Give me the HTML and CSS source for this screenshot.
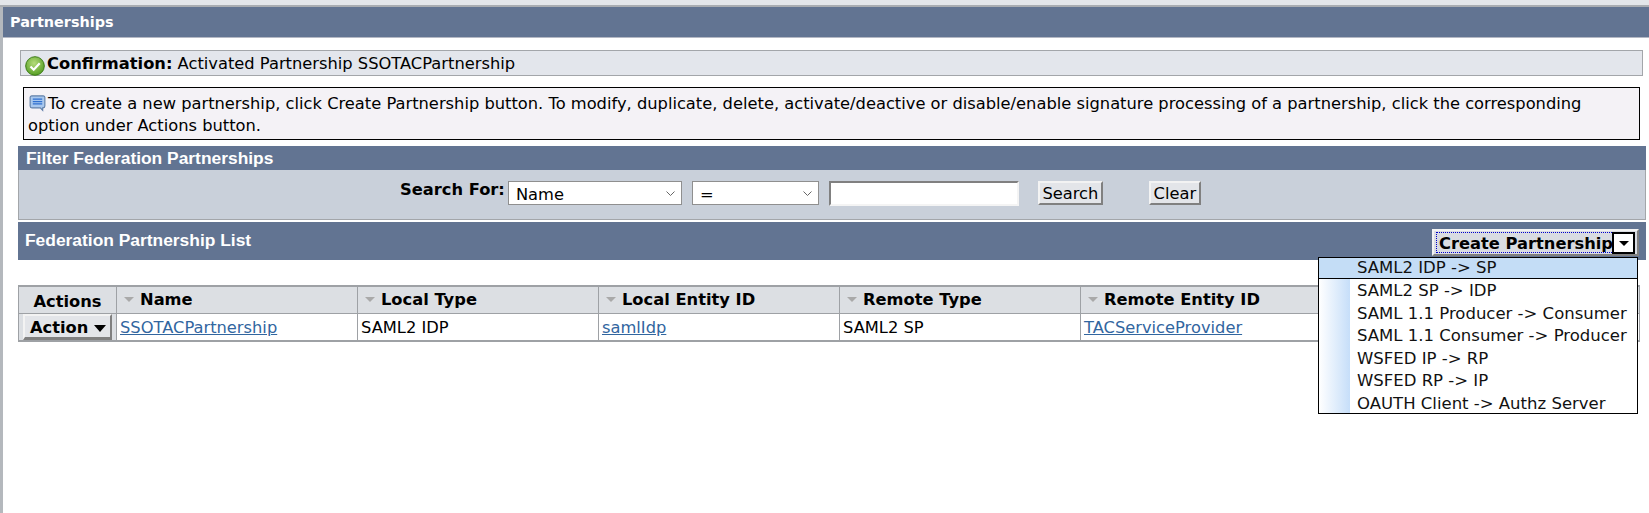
FILE: index.html
```html
<!DOCTYPE html>
<html lang="en">
<head>
<meta charset="utf-8">
<title>Partnerships</title>
<link rel="stylesheet" href="styles.css">
</head>
<body>
<div class="page">
  <div class="topband"></div>
  <h1 class="title">Partnerships</h1>
  <div class="confirm">
    <svg class="ic-check" viewBox="0 0 20 20" width="20" height="20"><defs><radialGradient id="g" cx="45%" cy="35%" r="70%"><stop offset="0" stop-color="#b5dc7a"/><stop offset="1" stop-color="#4f9a1e"/></radialGradient></defs><circle cx="10" cy="10" r="9.3" fill="url(#g)" stroke="#3d7d18"/><path d="M5.5 10.5l3.2 3.2 6-6.4" fill="none" stroke="#fff" stroke-width="2.2"/></svg>
    <span><b>Confirmation:</b> Activated Partnership SSOTACPartnership</span>
  </div>
  <div class="info">
    <svg class="ic-note" viewBox="0 0 18 18" width="17" height="18"><path d="M3 1.5h12a1.8 1.8 0 0 1 1.8 1.8v9a1.8 1.8 0 0 1-1.8 1.8h-.5v2.6l-2.6-2.6H3a1.8 1.8 0 0 1-1.8-1.8v-9A1.8 1.8 0 0 1 3 1.5z" fill="#a9c8ee" stroke="#5f7fa8" stroke-width="1.2"/><path d="M4 5h10M4 7.5h10M4 10h10" stroke="#2f6fd0" stroke-width="1.3"/></svg>To create a new partnership, click Create Partnership button. To modify, duplicate, delete, activate/deactive or disable/enable signature processing of a partnership, click the corresponding option under Actions button.
  </div>
  <section class="filter">
    <h2 class="bar-head">Filter Federation Partnerships</h2>
    <form class="filter-body">
      <label class="search-label" for="field">Search For:</label>
      <select id="field" class="sel sel-name"><option>Name</option></select>
      <select class="sel sel-op" aria-label="Operator"><option>=</option></select>
      <input class="txt" type="text" aria-label="Search text">
      <button class="btn btn-search" type="button">Search</button>
      <button class="btn btn-clear" type="button">Clear</button>
    </form>
  </section>
  <section class="list">
    <div class="list-head">
      <h2 class="list-title">Federation Partnership List</h2>
      <div class="create">
        <span class="create-label">Create Partnership</span>
        <span class="create-arrow"><i class="tri"></i></span>
      </div>
    </div>
    <div class="spacer"></div>
    <table class="grid">
      <colgroup><col class="c-act"><col class="c"><col class="c"><col class="c"><col class="c"><col class="c"><col></colgroup>
      <thead>
        <tr>
          <th class="th-act">Actions</th>
          <th><i class="sort"></i>Name</th>
          <th><i class="sort"></i>Local Type</th>
          <th><i class="sort"></i>Local Entity ID</th>
          <th><i class="sort"></i>Remote Type</th>
          <th><i class="sort"></i>Remote Entity ID</th>
          <th></th>
        </tr>
      </thead>
      <tbody>
        <tr>
          <td class="td-act"><span class="action">Action<i class="tri tri-lg"></i></span></td>
          <td><a href="#">SSOTACPartnership</a></td>
          <td>SAML2 IDP</td>
          <td><a href="#">samlIdp</a></td>
          <td>SAML2 SP</td>
          <td><a href="#">TACServiceProvider</a></td>
          <td></td>
        </tr>
      </tbody>
    </table>
    <ul class="menu">
      <li class="active">SAML2 IDP -&gt; SP</li>
      <li>SAML2 SP -&gt; IDP</li>
      <li>SAML 1.1 Producer -&gt; Consumer</li>
      <li>SAML 1.1 Consumer -&gt; Producer</li>
      <li>WSFED IP -&gt; RP</li>
      <li>WSFED RP -&gt; IP</li>
      <li>OAUTH Client -&gt; Authz Server</li>
    </ul>
  </section>
</div>
</body>
</html>
```
FILE: styles.css
```css
* { box-sizing: border-box; }
html, body { margin: 0; padding: 0; background: #fff; }
body { font-family: "DejaVu Sans", Verdana, sans-serif; font-size: 16.3px; color: #000; height: 513px; overflow: hidden; }
.page { border-left: 3px solid #b4b8bd; height: 513px; }
.topband { height: 7px; margin-left: -3px; background: #e3e6ea; border-bottom: 2px solid #a9adb2; }
.title { margin: 0; height: 31px; background: #627492; border-bottom: 1px solid #b4b8c4; color: #fff; font-size: 14.4px; font-weight: bold; line-height: 31px; padding-left: 7px; }
.confirm { margin: 12px 6px 0 17px; height: 26px; background: #e3e6ec; border: 1px solid #a3a6aa; display: flex; align-items: center; gap: 2px; padding-left: 4px; white-space: nowrap; }
.ic-check { flex: none; margin-top: 3px; margin-bottom: -3px; }
.confirm b { font-weight: bold; }
.info { margin: 11px 9px 0 20px; height: 53px; background: #f4f2f6; border: 1px solid #000; padding: 5px 4px 0 4px; line-height: 22px; }
.ic-note { vertical-align: -3px; margin: 0 2px 0 1px; }
.filter { margin: 6px 3px 0 15px; }
.bar-head { margin: 0; height: 24px; background: #627492; color: #fff; font: bold 17.4px/24px "Liberation Sans", Arial, sans-serif; padding-left: 8px; }
.filter-body { height: 50px; background: #c9d0da; border-bottom: 1px solid #a3a6aa; border-right: 1px solid #a3a6aa; border-left: 1px solid #a3a6aa; display: flex; align-items: flex-start; padding: 10px 0 0 381px; }
.search-label { font-weight: bold; margin-right: 3px; line-height: 20px; white-space: nowrap; }
.sel { appearance: none; height: 24px; margin-top: 1px; border: 1px solid #8f8f8f; color: #000; font: 16.3px "DejaVu Sans", sans-serif; padding: 2px 0 0 7px; border-radius: 0; background: #fff url("data:image/svg+xml,%3Csvg xmlns='http://www.w3.org/2000/svg' width='9' height='6'%3E%3Cpath d='M.5.5l4 4 4-4' fill='none' stroke='%23666'/%3E%3C/svg%3E") no-repeat right 6px top 9px; }
.sel-name { width: 174px; margin-right: 10px; }
.sel-op { width: 127px; margin-right: 10px; }
.txt { width: 190px; height: 25px; margin-top: 1px; border: 2px solid; border-color: #808080 #f4f4f4 #f4f4f4 #808080; background: #fff; }
.btn { height: 24px; margin-top: 1px; font: 16.3px "DejaVu Sans", sans-serif; padding: 0; background: #e3e5e9; color: #000; border: 2px solid; border-color: #f3f3f3 #808080 #808080 #f3f3f3; }
.btn-search { width: 65px; margin-left: 19px; }
.btn-clear { width: 52px; margin-left: 46px; }
.list { margin: 2px 3px 0 15px; position: relative; }
.list-head { height: 38px; background: #627492; display: flex; justify-content: space-between; align-items: flex-start; padding-right: 7px; }
.list-title { margin: 0; color: #fff; font: bold 17.4px/36px "Liberation Sans", Arial, sans-serif; padding-left: 7px; }
.create { margin-top: 7px; width: 207px; height: 27px; background: #d9dce2; border: 2px solid; border-color: #f3f3f3 #808080 #808080 #f3f3f3; display: flex; font-weight: bold; padding: 1px 0 0 2px; }
.create-label { width: 176px; height: 21px; border: 1px dotted #00c; border-right: 0; line-height: 21px; padding-left: 2px; white-space: nowrap; overflow: hidden; }
.create-arrow { width: 23px; height: 22px; background: #fff; border: 2px solid #000; display: flex; align-items: center; justify-content: center; }
.tri { display: inline-block; width: 0; height: 0; border: 5px solid transparent; border-top: 5px solid #000; border-bottom: 0; }
.tri-lg { border-width: 7px 6px 0; border-top-color: #000; margin-left: 6px; vertical-align: 1px; }
.spacer { height: 25px; }
.grid { width: 1622px; table-layout: fixed; border-collapse: collapse; border-top: 2px solid #9ea1a5; border-bottom: 2px solid #9ea1a5; border-left: 1px solid #9ea1a5; }
.c-act { width: 98px; }
.c { width: 241px; }
.grid th { height: 27px; background: #dcdfe3; text-align: left; font-weight: bold; font-size: 16.3px; padding: 0 0 0 7px; border-right: 1px solid #9ea1a5; border-bottom: 1px solid #9ea1a5; white-space: nowrap; }
.grid .th-act { text-align: center; padding: 3px 0 0 0; }
.sort { display: inline-block; width: 0; height: 0; border: 5px solid transparent; border-top: 5px solid #a9a9a9; border-bottom: 0; margin-right: 6px; vertical-align: 3px; }
.grid td { height: 27px; padding: 2px 0 0 3px; border-right: 1px solid #9ea1a5; white-space: nowrap; }
.grid .td-act { padding: 0 0 0 4px; background: #dcdfe3; }
.grid a { color: #32669f; }
.action { display: block; width: 89px; height: 26px; background: #e3e5e9; border: 2px solid; border-color: #f3f3f3 #808080 #808080 #f3f3f3; border-bottom-width: 3px; font-weight: bold; line-height: 23px; padding-left: 5px; white-space: nowrap; }
.menu { position: absolute; top: 35px; right: 8px; width: 320px; height: 157px; margin: 0; padding: 0; list-style: none; border: 1px solid #000; background: linear-gradient(to right, #fff 0, #c6def9 31px, #fff 31px); }
.menu li { height: 22.5px; line-height: 23px; padding-left: 38px; font-size: 16.5px; white-space: nowrap; color: #111; }
.menu .active { height: 21px; background: #c4ddf6; border-bottom: 1px solid #000; line-height: 20px; }
```
